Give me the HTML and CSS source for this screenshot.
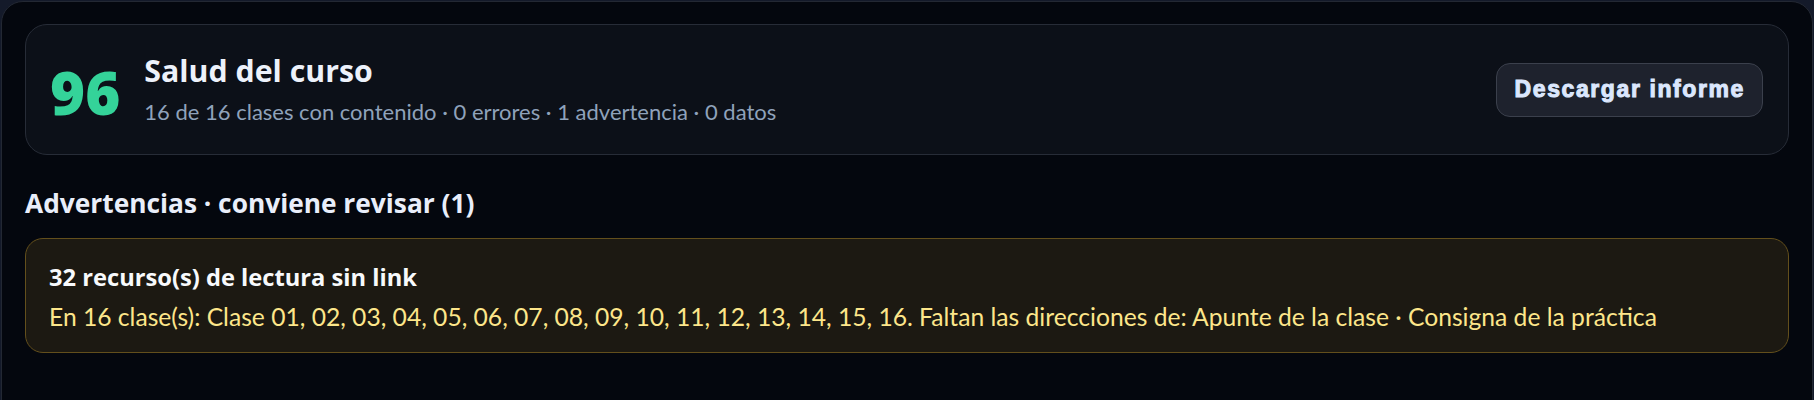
FILE: index.html
```html
<!DOCTYPE html>
<html lang="es">
<head>
<meta charset="utf-8">
<title>Salud del curso</title>
<link rel="stylesheet" href="styles.css">
</head>
<body>
<div class="panel">
  <section class="health">
    <div class="score">96</div>
    <div class="summary">
      <h1 class="title">Salud del curso</h1>
      <p class="meta">16 de 16 clases con contenido · 0 errores · 1 advertencia · 0 datos</p>
    </div>
    <button class="download" type="button">Descargar informe</button>
  </section>
  <h2 class="section-title">Advertencias · conviene revisar (1)</h2>
  <div class="warning">
    <div class="warning-title">32 recurso(s) de lectura sin link</div>
    <div class="warning-body">En 16 clase(s): Clase 01, 02, 03, 04, 05, 06, 07, 08, 09, 10, 11, 12, 13, 14, 15, 16. Faltan las direcciones de: Apunte de la clase · Consigna de la práctica</div>
  </div>
</div>
</body>
</html>
```
FILE: styles.css
```css
* { box-sizing: border-box; }
html, body { margin: 0; padding: 0; }
body {
  background: #141a2a;
  font-family: Lato, "Open Sans", sans-serif;
  overflow: hidden;
  height: 400px;
}
.panel {
  margin: 1px 1px 0 1px;
  min-height: 460px;
  background: #04070e;
  border: 1px solid #232833;
  border-radius: 22px;
  padding: 22px 23px;
}
.health {
  display: flex;
  align-items: center;
  height: 131px;
  background: #0c1018;
  border: 1px solid #272c37;
  border-radius: 22px;
  padding: 0 25px 0 24px;
}
.score {
  font-family: "Open Sans", Lato, sans-serif;
  font-size: 60px;
  line-height: 60px;
  font-weight: 800;
  color: #34d399;
  padding-top: 5px;
  margin-right: 24px;
}
.summary { flex: 1; }
.title {
  margin: 0;
  font-family: "Open Sans", Lato, sans-serif;
  font-size: 30.3px;
  line-height: 36px;
  font-weight: 700;
  color: #edf2fb;
}
.meta {
  margin: 9px 0 0;
  font-size: 22px;
  line-height: 28px;
  color: #8fa2bb;
}
.download {
  height: 54px;
  padding: 0 17px 0 18px;
  background: #1e222d;
  border: 1px solid #3b404c;
  border-radius: 14px;
  color: #dbe7fd;
  font-family: "Liberation Sans", Arial, sans-serif;
  font-weight: 700;
  font-size: 23px;
  letter-spacing: 1.6px;
  -webkit-text-stroke: 1px #dbe7fd;
}
.section-title {
  margin: 31px 0 18px;
  font-family: "Open Sans", Lato, sans-serif;
  font-size: 26.3px;
  line-height: 34px;
  font-weight: 700;
  color: #e9eefa;
}
.warning {
  background: #1c1912;
  border: 1px solid #634f1c;
  border-radius: 18px;
  padding: 23px 23px 19px;
}
.warning-title {
  font-family: "Open Sans", Lato, sans-serif;
  font-size: 23.7px;
  line-height: 30px;
  font-weight: 700;
  color: #f8fafc;
}
.warning-body {
  margin-top: 9px;
  font-size: 24.65px;
  line-height: 32px;
  color: #fde68a;
}
```
